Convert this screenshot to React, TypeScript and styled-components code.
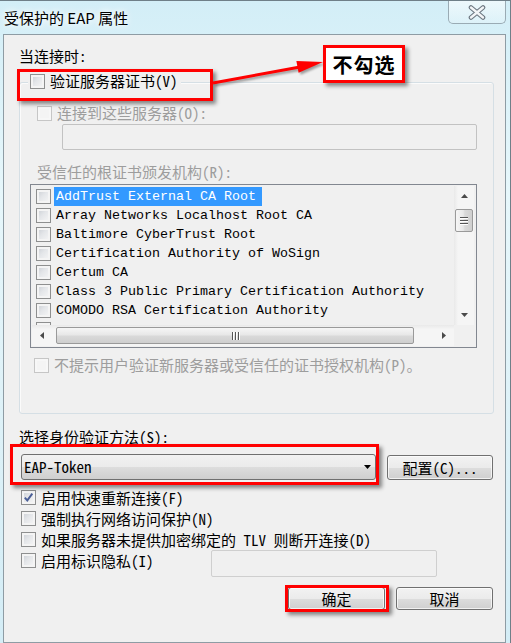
import React from "react";
import styled, { createGlobalStyle } from "styled-components";

const UI_FONT = `"Noto Sans Mono CJK SC", "Noto Sans CJK SC", "Liberation Mono", monospace`;
const LIST_FONT = `"Liberation Mono", "Noto Sans Mono CJK SC", monospace`;

const GlobalStyle = createGlobalStyle`
  html, body { margin: 0; padding: 0; background: #ffffff; }
  body { width: 511px; height: 643px; overflow: hidden; font-family: ${UI_FONT}; }
  * { box-sizing: border-box; }
`;

const Window = styled.div`
  position: relative;
  width: 511px;
  height: 643px;
  display: flex;
  flex-direction: column;
  padding: 0 4px 0 3px;
  border-top: 1px solid #6f7f88;
  border-right: 1px solid #6f7f88;
  background: linear-gradient(180deg, #d3eef7 0%, #e7f7fb 30%, #dff2f8 60%, #d4edf6 100%);
  font-family: ${UI_FONT};
  font-size: 15px;
  color: #000;
`;

const TitleBar = styled.div`
  flex: none;
  height: 33px;
  display: flex;
  align-items: flex-start;
`;

const TitleText = styled.div`
  align-self: center;
  margin: 1px 0 0 1px;
  font-family: "Noto Sans CJK SC", sans-serif;
  font-size: 15px;
  line-height: 18px;
  color: #000;
  text-shadow: 0 0 6px #fff, 0 0 10px #fff;
`;

const CloseButton = styled.div`
  margin-left: auto;
  width: 58px;
  height: 23px;
  display: flex;
  align-items: center;
  justify-content: center;
  border: 1px solid #9aabb4;
  border-top: none;
  border-radius: 0 0 5px 5px;
  background: linear-gradient(180deg, rgba(255, 255, 255, 0.6), rgba(235, 247, 251, 0.35));
`;

const Panel = styled.div`
  flex: 1;
  display: flex;
  flex-direction: column;
  align-items: flex-start;
  border: 1px solid #8e9ca4;
  background: #f0f0f0;
  padding: 0 12px 0 15px;
`;

const Caption = styled.div<{ $disabled?: boolean; $mt?: number; $ml?: number }>`
  height: 16px;
  line-height: 16px;
  white-space: nowrap;
  margin-top: ${(p) => p.$mt ?? 0}px;
  margin-left: ${(p) => p.$ml ?? 0}px;
  color: ${(p) => (p.$disabled ? "#9d9d9d" : "#000")};
`;

const CheckRow = styled.div<{ $disabled?: boolean; $mt?: number; $ml?: number; $h?: number }>`
  display: flex;
  align-items: center;
  gap: 5px;
  height: ${(p) => p.$h ?? 16}px;
  line-height: 16px;
  white-space: nowrap;
  margin-top: ${(p) => p.$mt ?? 0}px;
  margin-left: ${(p) => p.$ml ?? 0}px;
  color: ${(p) => (p.$disabled ? "#9d9d9d" : "#000")};
`;

const GroupHeader = styled(CheckRow)`
  background: #f0f0f0;
  padding: 0 3px 0 2px;
`;

const Box = styled.span<{ $disabled?: boolean }>`
  flex: none;
  width: 15px;
  height: 15px;
  display: inline-flex;
  align-items: center;
  justify-content: center;
  border: 1px solid ${(p) => (p.$disabled ? "#c6c6c6" : "#8e8f8f")};
  background: ${(p) =>
    p.$disabled
      ? "#f4f4f4"
      : "linear-gradient(135deg, #c8ccd2 0%, #e4e6e9 45%, #f7f7f7 100%)"};
  box-shadow: inset 0 0 0 2px ${(p) => (p.$disabled ? "#f7f7f7" : "#f4f4f4")};
`;

const GroupBox = styled.div`
  margin-top: 18px;
  margin-right: -1px;
  align-self: stretch;
  height: 332px;
  border: 1px solid #d5dfe5;
  border-radius: 3px;
  box-shadow: inset 1px 1px 0 #fbfbfb;
  display: flex;
  flex-direction: column;
  align-items: flex-start;
`;

const GroupHeaderSlot = styled.div`
  margin-top: -10px;
  margin-left: 8px;
`;

const DisabledInput = styled.div<{ $mt?: number; $ml?: number; $w: number; $h: number }>`
  margin-top: ${(p) => p.$mt ?? 0}px;
  margin-left: ${(p) => p.$ml ?? 0}px;
  width: ${(p) => p.$w}px;
  height: ${(p) => p.$h}px;
  border: 1px solid #c2c2c2;
  border-radius: 2px;
  background: #f0f0f0;
`;

const ListBox = styled.div`
  margin-top: 4px;
  margin-left: 10px;
  width: 447px;
  height: 164px;
  border: 1px solid #828790;
  background: #f0f0f0;
  padding: 1px 2px 1px 1px;
  display: grid;
  grid-template-columns: 1fr 20px;
  grid-template-rows: 1fr 21px;
`;

const ListItems = styled.div`
  overflow: hidden;
  padding-top: 1px;
  display: flex;
  flex-direction: column;
`;

const ListRow = styled.div`
  flex: none;
  height: 19px;
  display: flex;
  align-items: center;
  gap: 3px;
  padding-left: 4px;
  white-space: nowrap;
`;

const PartialRow = styled(ListRow)`
  align-items: flex-start;
  padding-top: 2px;
`;

const ItemText = styled.span<{ $selected?: boolean }>`
  height: 19px;
  line-height: 19px;
  padding: 0 6px 0 2px;
  font-family: ${LIST_FONT};
  font-size: 13.333px;
  color: ${(p) => (p.$selected ? "#ffffff" : "#000000")};
  background: ${(p) => (p.$selected ? "#3399ff" : "transparent")};
`;

const VScroll = styled.div`
  display: flex;
  flex-direction: column;
  align-items: center;
  background: linear-gradient(90deg, #e9e9e9 0%, #f5f5f5 20%, #f5f5f5 100%);
`;

const HScroll = styled.div`
  display: flex;
  align-items: center;
  background: linear-gradient(180deg, #e9e9e9 0%, #f5f5f5 20%, #f5f5f5 100%);
`;

const ScrollCorner = styled.div`
  background: #f0f0f0;
`;

const ArrowCell = styled.div<{ $grow?: boolean }>`
  flex: none;
  width: 20px;
  height: 20px;
  display: flex;
  align-items: center;
  justify-content: center;
  margin-top: ${(p) => (p.$grow ? "auto" : "0")};
`;

const VThumb = styled.div`
  width: 18px;
  height: 23px;
  margin-top: 3px;
  border: 1px solid #9a9a9a;
  border-radius: 2px;
  background: linear-gradient(90deg, #f6f6f6 0%, #e8e8e8 45%, #d9d9d9 55%, #cfcfcf 100%);
  display: flex;
  flex-direction: column;
  align-items: center;
  justify-content: center;
  gap: 2px;
`;

const HThumb = styled.div`
  width: 358px;
  height: 17px;
  margin-left: 4px;
  border: 1px solid #9a9a9a;
  border-radius: 2px;
  background: linear-gradient(180deg, #f6f6f6 0%, #e8e8e8 45%, #d9d9d9 55%, #cfcfcf 100%);
  display: flex;
  align-items: center;
  justify-content: center;
  gap: 2px;
`;

const GripH = styled.span`
  width: 8px;
  height: 1px;
  background: #555;
  box-shadow: 0 1px 0 #fff;
`;

const GripV = styled.span`
  width: 1px;
  height: 8px;
  background: #555;
  box-shadow: 1px 0 0 #fff;
`;

const RightArrowCell = styled(ArrowCell)`
  margin-left: auto;
`;

const ComboRow = styled.div`
  margin-top: 9px;
  margin-left: 2px;
  display: flex;
  align-items: flex-end;
  gap: 11px;
`;

const Combo = styled.div`
  width: 355px;
  height: 26px;
  border: 1px solid #707070;
  border-radius: 3px;
  background: linear-gradient(180deg, #f2f2f2 0%, #ebebeb 50%, #dddddd 51%, #cfcfcf 100%);
  display: flex;
  align-items: center;
  padding: 0 4px 0 2px;
  font-family: ${UI_FONT};
`;

const ComboText = styled.span`
  flex: 1;
  line-height: 16px;
`;

const PushButton = styled.div<{ $w: number; $h: number }>`
  width: ${(p) => p.$w}px;
  height: ${(p) => p.$h}px;
  border: 1px solid #707070;
  border-radius: 3px;
  background: linear-gradient(180deg, #f2f2f2 0%, #ebebeb 50%, #dddddd 51%, #cfcfcf 100%);
  box-shadow: inset 0 0 0 1px rgba(255, 255, 255, 0.7);
  display: flex;
  align-items: center;
  justify-content: center;
  line-height: 16px;
  white-space: nowrap;
`;

const OptionsBlock = styled.div`
  margin-top: 7px;
  align-self: stretch;
  display: flex;
  flex-direction: column;
`;

const IdentityRow = styled.div`
  display: flex;
  align-items: flex-start;
`;

const IdentityInput = styled(DisabledInput)`
  margin-left: auto;
  margin-right: 56px;
  border-color: #cfcfcf;
`;

const ButtonRow = styled.div`
  margin-top: 10px;
  align-self: stretch;
  display: flex;
  justify-content: flex-end;
  gap: 11px;
`;

const RedFrame = styled.div<{ $x: number; $y: number; $w: number; $h: number }>`
  position: absolute;
  left: ${(p) => p.$x}px;
  top: ${(p) => p.$y}px;
  width: ${(p) => p.$w}px;
  height: ${(p) => p.$h}px;
  border: 3px solid #ff0000;
  box-shadow: 3px 3px 4px rgba(0, 0, 0, 0.45);
  pointer-events: none;
`;

const Callout = styled.div`
  position: absolute;
  left: 323px;
  top: 44px;
  width: 82px;
  height: 38px;
  border: 3px solid #ff0000;
  background: #ffffff;
  box-shadow: 3px 3px 4px rgba(0, 0, 0, 0.45);
  display: flex;
  align-items: center;
  justify-content: center;
  font-family: "Noto Sans CJK SC", sans-serif;
  font-weight: 700;
  font-size: 20px;
  letter-spacing: 1px;
  color: #000;
`;

const ArrowSvg = styled.svg`
  position: absolute;
  left: 205px;
  top: 50px;
  filter: drop-shadow(2px 2px 1px rgba(0, 0, 0, 0.35));
  pointer-events: none;
`;

const Tri = ({ dir, color = "#4a4a4a" }: { dir: "up" | "down" | "left" | "right"; color?: string }) => {
  const pts: Record<string, string> = {
    up: "0,4 3.5,0 7,4",
    down: "0,0 7,0 3.5,4",
    left: "4,0 4,7 0,3.5",
    right: "0,0 4,3.5 0,7",
  };
  const vertical = dir === "up" || dir === "down";
  return (
    <svg width={vertical ? 7 : 4} height={vertical ? 4 : 7} viewBox={vertical ? "0 0 7 4" : "0 0 4 7"}>
      <polygon points={pts[dir]} fill={color} />
    </svg>
  );
};

const Check = ({ disabled, checked }: { disabled?: boolean; checked?: boolean }) => (
  <Box $disabled={disabled}>
    {checked && (
      <svg width="11" height="11" viewBox="0 0 11 11">
        <path d="M1.8 5.6 L4.3 8.4 L9.3 1.6" fill="none" stroke="#4a5e96" strokeWidth="1.9" />
      </svg>
    )}
  </Box>
);

const certs = [
  "AddTrust External CA Root",
  "Array Networks Localhost Root CA",
  "Baltimore CyberTrust Root",
  "Certification Authority of WoSign",
  "Certum CA",
  "Class 3 Public Primary Certification Authority",
  "COMODO RSA Certification Authority",
];

export default function App() {
  return (
    <>
      <GlobalStyle />
      <Window>
        <TitleBar>
          <TitleText>受保护的 EAP 属性</TitleText>
          <CloseButton>
            <svg width="18" height="15" viewBox="0 0 18 15">
              <path d="M3 2.5 L15 12.5 M15 2.5 L3 12.5" stroke="#6b7680" strokeWidth="4.6" strokeLinecap="round" />
              <path d="M3 2.5 L15 12.5 M15 2.5 L3 12.5" stroke="#f2f5f7" strokeWidth="2.4" strokeLinecap="round" />
            </svg>
          </CloseButton>
        </TitleBar>
        <Panel>
          <Caption $mt={13}>当连接时:</Caption>
          <GroupBox>
            <GroupHeaderSlot>
              <GroupHeader>
                <Check />
                <span>验证服务器证书(V)</span>
              </GroupHeader>
            </GroupHeaderSlot>
            <CheckRow $disabled $mt={16} $ml={17}>
              <Check disabled />
              <span>连接到这些服务器(O):</span>
            </CheckRow>
            <DisabledInput $mt={3} $ml={42} $w={415} $h={26} />
            <Caption $disabled $mt={14} $ml={17}>
              受信任的根证书颁发机构(R):
            </Caption>
            <ListBox>
              <ListItems>
                {certs.map((c, i) => (
                  <ListRow key={c}>
                    <Check />
                    <ItemText $selected={i === 0}>{c}</ItemText>
                  </ListRow>
                ))}
                <PartialRow>
                  <Check />
                </PartialRow>
              </ListItems>
              <VScroll>
                <ArrowCell>
                  <Tri dir="up" />
                </ArrowCell>
                <VThumb>
                  <GripH />
                  <GripH />
                  <GripH />
                </VThumb>
                <ArrowCell $grow>
                  <Tri dir="down" />
                </ArrowCell>
              </VScroll>
              <HScroll>
                <ArrowCell>
                  <Tri dir="left" />
                </ArrowCell>
                <HThumb>
                  <GripV />
                  <GripV />
                  <GripV />
                </HThumb>
                <RightArrowCell>
                  <Tri dir="right" />
                </RightArrowCell>
              </HScroll>
              <ScrollCorner />
            </ListBox>
            <CheckRow $disabled $mt={9} $ml={14}>
              <Check disabled />
              <span>不提示用户验证新服务器或受信任的证书授权机构(P)。</span>
            </CheckRow>
          </GroupBox>
          <Caption $mt={15}>选择身份验证方法(S):</Caption>
          <ComboRow>
            <Combo>
              <ComboText>EAP-Token</ComboText>
              <Tri dir="down" color="#000" />
            </Combo>
            <PushButton $w={106} $h={25}>配置(C)...</PushButton>
          </ComboRow>
          <OptionsBlock>
            <CheckRow $h={21} $ml={2}>
              <Check checked />
              <span>启用快速重新连接(F)</span>
            </CheckRow>
            <CheckRow $h={21} $ml={2}>
              <Check />
              <span>强制执行网络访问保护(N)</span>
            </CheckRow>
            <CheckRow $h={21} $ml={2}>
              <Check />
              <span>如果服务器未提供加密绑定的 TLV 则断开连接(D)</span>
            </CheckRow>
            <IdentityRow>
              <CheckRow $h={21} $ml={2}>
                <Check />
                <span>启用标识隐私(I)</span>
              </CheckRow>
              <IdentityInput $w={226} $h={27} />
            </IdentityRow>
          </OptionsBlock>
          <ButtonRow>
            <PushButton $w={97} $h={23}>确定</PushButton>
            <PushButton $w={97} $h={23}>取消</PushButton>
          </ButtonRow>
        </Panel>

        <RedFrame $x={17} $y={68} $w={196} $h={32} />
        <RedFrame $x={10} $y={443} $w={369} $h={41} />
        <RedFrame $x={285} $y={584} $w={104} $h={27} />
        <ArrowSvg width="125" height="40" viewBox="0 0 125 40">
          <line x1="8" y1="32" x2="95" y2="16" stroke="#ff0000" strokeWidth="3" />
          <polygon points="118,11 93.6,21.8 91.4,10" fill="#ff0000" />
        </ArrowSvg>
        <Callout>不勾选</Callout>
      </Window>
    </>
  );
}
